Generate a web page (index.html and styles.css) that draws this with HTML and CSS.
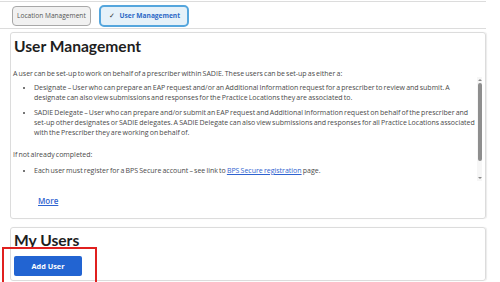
FILE: index.html
```html
<!DOCTYPE html>
<html lang="en">
<head>
  <meta charset="UTF-8" />
  <title>User Management</title>
  <link rel="stylesheet" href="styles.css">
</head>
<body>
  <nav class="tabs">
    <button class="tab">Location Management</button>
    <button class="tab tab-active"><span class="tick">&#10003;</span> User Management</button>
  </nav>

  <section class="card">
    <h2>User Management</h2>
    <div class="scroll-box">
      <div class="scroll-content">
        <p>A user can be set-up to work on behalf of a prescriber within SADIE. These users can be set-up as either a:</p>
        <ul>
          <li>Designate – User who can prepare an EAP request and/or an Additional Information request for a prescriber to review and submit. A designate can also view submissions and responses for the Practice Locations they are associated to.</li>
          <li>SADIE Delegate – User who can prepare and/or submit an EAP request and Additional Information request on behalf of the prescriber and set-up other designates or SADIE delegates. A SADIE Delegate can also view submissions and responses for all Practice Locations associated with the Prescriber they are working on behalf of.</li>
        </ul>
        <p class="gap">If not already completed:</p>
        <ul>
          <li>Each user must register for a BPS Secure account – see link to <a href="#">BPS Secure registration</a> page.</li>
        </ul>
      </div>
      <div class="scrollbar">
        <span class="arrow up"></span>
        <span class="thumb"></span>
        <span class="track"></span>
        <span class="arrow down"></span>
      </div>
    </div>
    <a class="more" href="#">More</a>
  </section>

  <section class="card users">
    <h2>My Users</h2>
    <button class="btn-primary">Add User</button>
  </section>

  <div class="highlight"></div>
</body>
</html>
```

FILE: styles.css
```css
:root {
  --line-color: #dcdcdc;
  --text-color: #4a4a4a;
  --heading-color: #1e1e1e;
  --link-color: #2f63d0;
  --primary: #2264d2;
}

body {
  margin: 0;
  padding: 0;
  font-family: "Open Sans", "Liberation Sans", sans-serif;
  color: var(--text-color);
  background: #fff;
  position: relative;
  height: 282px;
  overflow: hidden;
}

.tabs {
  width: 486px;
  margin-top: 1px;
  border-top: 1px solid var(--line-color);
  border-bottom: 1px solid var(--line-color);
  padding: 2px 0 1px 12px;
  display: flex;
  align-items: center;
  gap: 8px;
  box-sizing: border-box;
  height: 28px;
}

.tab {
  font-family: "Open Sans", "Liberation Sans", sans-serif;
  font-size: 6.6px;
  color: #555;
  background: #f1f1f1;
  border: 1px solid #a8a8a8;
  border-radius: 4px;
  height: 20px;
  padding: 0 4px;
  cursor: pointer;
}

.tab-active {
  height: 22px;
  background: #e5f1f9;
  border: 2px solid #55a6dd;
  border-radius: 5px;
  color: #2b68c6;
  font-weight: 700;
  padding: 0 7px 0 8px;
}

.tick {
  color: #333;
  font-weight: 400;
  font-size: 7px;
  margin-right: 3px;
}

.card {
  width: 476px;
  margin: 3px 0 0 10px;
  border: 1px solid var(--line-color);
  border-radius: 3px;
  box-shadow: 1px 0 1px rgba(0,0,0,0.08);
  box-sizing: border-box;
  height: 187px;
}

.card h2 {
  font-family: "Lato", "Liberation Sans", sans-serif;
  font-weight: 700;
  font-size: 15.6px;
  color: var(--heading-color);
  margin: 3px 0 0 3px;
  line-height: 20px;
}

.scroll-box {
  display: flex;
  height: 118px;
  margin-top: 13px;
}

.scroll-content {
  flex: 1;
  overflow: hidden;
  padding: 0 0 0 2px;
  font-size: 7px;
  word-spacing: -0.7px;
  line-height: 10px;
}

.scroll-content p {
  margin: 0 0 4px;
}

.scroll-content p.gap {
  margin-top: 12px;
  margin-bottom: 6px;
}

.scroll-content ul {
  margin: 0;
  padding-left: 21px;
}

.scroll-content li {
  margin-bottom: 5px;
}

.scroll-content a {
  color: var(--link-color);
  text-decoration: underline;
}

.scrollbar {
  width: 5px;
  margin: 8px 3px 6px 0;
  display: flex;
  flex-direction: column;
  align-items: center;
  background: #f6f6f6;
}

.arrow {
  width: 0;
  height: 0;
  border-left: 2px solid transparent;
  border-right: 2px solid transparent;
  margin: 2px 0;
}

.arrow.up {
  border-bottom: 2px solid #8a8a8a;
}

.arrow.down {
  border-top: 2px solid #8a8a8a;
}

.thumb {
  width: 4px;
  height: 78px;
  background: #8e8e8e;
  border-radius: 2px;
}

.track {
  flex: 1;
}

.more {
  display: inline-block;
  margin: 8px 0 0 27px;
  font-size: 8px;
  font-weight: 600;
  color: var(--link-color);
  text-decoration: underline;
}

.card.users {
  margin-top: 8px;
  height: 54px;
}

.card.users h2 {
  margin-top: 2px;
}

.btn-primary {
  margin: 6px 0 0 3px;
  width: 68px;
  height: 20px;
  background: var(--primary);
  color: #fff;
  border: none;
  border-radius: 2px;
  font-family: "Open Sans", "Liberation Sans", sans-serif;
  font-weight: 700;
  font-size: 7.3px;
  cursor: pointer;
}

/* annotation box over the button */
.highlight {
  position: absolute;
  left: 2px;
  top: 247px;
  width: 91px;
  height: 40px;
  border: 2px solid #e0201f;
}
```
